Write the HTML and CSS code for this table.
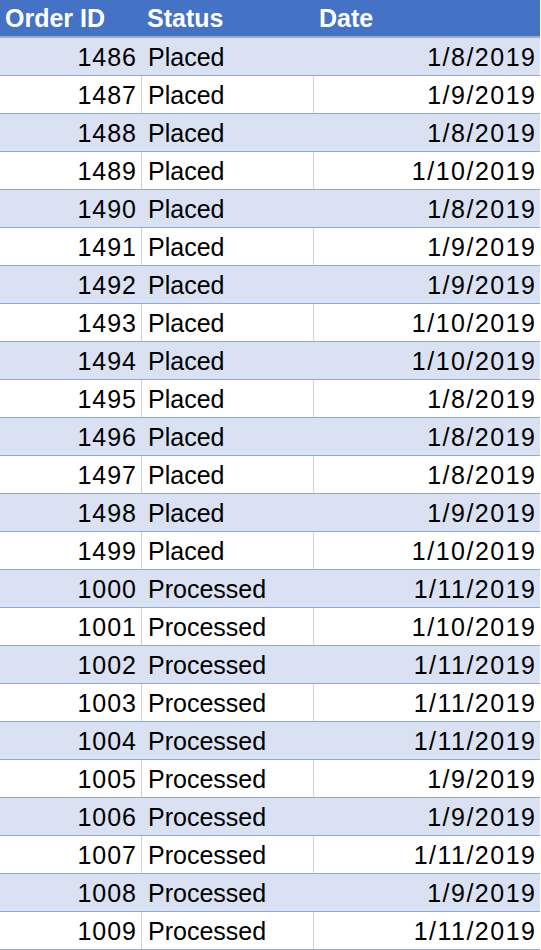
FILE: index.html
```html
<!DOCTYPE html>
<html lang="en">
<head>
    <meta charset="UTF-8">
    <meta name="viewport" content="width=device-width, initial-scale=1.0">
    <title>Orders</title>
    <link rel="stylesheet" href="styles.css">
</head>
<body>
    <div class="sheet">
        <div class="row head">
            <div class="cell">Order ID</div>
            <div class="cell">Status</div>
            <div class="cell">Date</div>
        </div>
        <div class="row band"><div class="cell id">1486</div><div class="cell">Placed</div><div class="cell date">1/8/2019</div></div>
        <div class="row"><div class="cell id">1487</div><div class="cell">Placed</div><div class="cell date">1/9/2019</div></div>
        <div class="row band"><div class="cell id">1488</div><div class="cell">Placed</div><div class="cell date">1/8/2019</div></div>
        <div class="row"><div class="cell id">1489</div><div class="cell">Placed</div><div class="cell date">1/10/2019</div></div>
        <div class="row band"><div class="cell id">1490</div><div class="cell">Placed</div><div class="cell date">1/8/2019</div></div>
        <div class="row"><div class="cell id">1491</div><div class="cell">Placed</div><div class="cell date">1/9/2019</div></div>
        <div class="row band"><div class="cell id">1492</div><div class="cell">Placed</div><div class="cell date">1/9/2019</div></div>
        <div class="row"><div class="cell id">1493</div><div class="cell">Placed</div><div class="cell date">1/10/2019</div></div>
        <div class="row band"><div class="cell id">1494</div><div class="cell">Placed</div><div class="cell date">1/10/2019</div></div>
        <div class="row"><div class="cell id">1495</div><div class="cell">Placed</div><div class="cell date">1/8/2019</div></div>
        <div class="row band"><div class="cell id">1496</div><div class="cell">Placed</div><div class="cell date">1/8/2019</div></div>
        <div class="row"><div class="cell id">1497</div><div class="cell">Placed</div><div class="cell date">1/8/2019</div></div>
        <div class="row band"><div class="cell id">1498</div><div class="cell">Placed</div><div class="cell date">1/9/2019</div></div>
        <div class="row"><div class="cell id">1499</div><div class="cell">Placed</div><div class="cell date">1/10/2019</div></div>
        <div class="row band"><div class="cell id">1000</div><div class="cell">Processed</div><div class="cell date">1/11/2019</div></div>
        <div class="row"><div class="cell id">1001</div><div class="cell">Processed</div><div class="cell date">1/10/2019</div></div>
        <div class="row band"><div class="cell id">1002</div><div class="cell">Processed</div><div class="cell date">1/11/2019</div></div>
        <div class="row"><div class="cell id">1003</div><div class="cell">Processed</div><div class="cell date">1/11/2019</div></div>
        <div class="row band"><div class="cell id">1004</div><div class="cell">Processed</div><div class="cell date">1/11/2019</div></div>
        <div class="row"><div class="cell id">1005</div><div class="cell">Processed</div><div class="cell date">1/9/2019</div></div>
        <div class="row band"><div class="cell id">1006</div><div class="cell">Processed</div><div class="cell date">1/9/2019</div></div>
        <div class="row"><div class="cell id">1007</div><div class="cell">Processed</div><div class="cell date">1/11/2019</div></div>
        <div class="row band"><div class="cell id">1008</div><div class="cell">Processed</div><div class="cell date">1/9/2019</div></div>
        <div class="row"><div class="cell id">1009</div><div class="cell">Processed</div><div class="cell date">1/11/2019</div></div>
    </div>
</body>
</html>
```

FILE: styles.css
```css
/* Sheet */
body {
    margin: 0;
    background: #ffffff;
    font-family: "Liberation Sans", Arial, sans-serif;
    font-size: 25px;
    color: #000000;
}

.sheet {
    width: 540px;
}

.row {
    display: grid;
    grid-template-columns: 141px 172px 227px;
    height: 37px;
    border-bottom: 1px solid #8ea9db;
}

.cell {
    padding: 1px 5px 0 6px;
    line-height: 36px;
    white-space: nowrap;
    overflow: hidden;
}

/* white rows show the grid lines */
.row .cell + .cell {
    border-left: 1px solid #d4d4d4;
}

.row.band {
    background: #d9e1f2;
}

.row.band .cell + .cell {
    border-left-color: #d9e1f2;
}

/* numbers are a touch wider in the original font */
.id {
    text-align: right;
    letter-spacing: 1px;
    padding-right: 4px;
}

.date {
    text-align: right;
    letter-spacing: 1.5px;
    padding-right: 3.5px;
}

/* Header */
.row.head {
    height: 36px;
    background: #4472c4;
    color: #ffffff;
    font-weight: bold;
    border-bottom: 2px solid #a3adbf;
}

.row.head .cell {
    padding-left: 5px;
    line-height: 35px;
}

.row.head .cell + .cell {
    border-left: 1px solid #4472c4;
}
```
